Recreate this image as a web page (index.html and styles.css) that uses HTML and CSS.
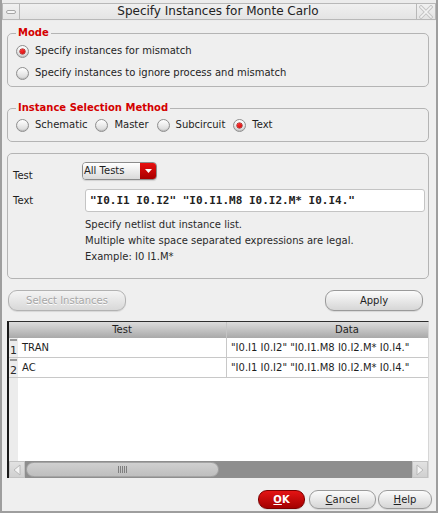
FILE: index.html
```html
<!DOCTYPE html>
<html>
<head>
<meta charset="utf-8">
<title>Specify Instances for Monte Carlo</title>
<link rel="stylesheet" href="styles.css">
</head>
<body>
<div class="win">
  <div class="titlebar">
    <div class="tb-btn tb-min"><span class="min-bar"></span></div>
    <div class="tb-title">Specify Instances for Monte Carlo</div>
    <div class="tb-btn tb-close">
      <svg width="14" height="14" viewBox="0 0 14 14">
        <path d="M2 2 L12 12 M12 2 L2 12" stroke="#c4c4c4" stroke-width="3.6" stroke-linecap="square" fill="none"/>
        <path d="M2 2 L12 12 M12 2 L2 12" stroke="#f2f2f2" stroke-width="1.6" stroke-linecap="square" fill="none"/>
      </svg>
    </div>
  </div>

  <fieldset class="group g-mode">
    <legend>Mode</legend>
    <div class="radio-row"><span class="radio on"></span><span>Specify instances for mismatch</span></div>
    <div class="radio-row"><span class="radio"></span><span>Specify instances to ignore process and mismatch</span></div>
  </fieldset>

  <fieldset class="group g-method">
    <legend>Instance Selection Method</legend>
    <div class="radio-inline">
      <div class="radio-item"><span class="radio"></span><span>Schematic</span></div>
      <div class="radio-item"><span class="radio"></span><span>Master</span></div>
      <div class="radio-item"><span class="radio"></span><span>Subcircuit</span></div>
      <div class="radio-item"><span class="radio on"></span><span>Text</span></div>
    </div>
  </fieldset>

  <div class="panel">
    <div class="form-row row-test">
      <span class="lbl lbl-test">Test</span>
      <div class="combo"><span class="combo-text">All Tests</span><span class="combo-arrow"><svg width="7" height="4" viewBox="0 0 7 4"><path d="M0 0 H7 L3.5 4 Z" fill="#ffffff"/></svg></span></div>
    </div>
    <div class="form-row row-text">
      <span class="lbl lbl-text">Text</span>
      <div class="input">"I0.I1 I0.I2" "I0.I1.M8 I0.I2.M* I0.I4."</div>
    </div>
    <div class="help">
      <div>Specify netlist dut instance list.</div>
      <div>Multiple white space separated expressions are legal.</div>
      <div>Example: I0 I1.M*</div>
    </div>
  </div>

  <div class="btn-row">
    <div class="btn btn-select disabled">Select Instances</div>
    <div class="btn btn-apply">Apply</div>
  </div>

  <div class="table">
    <div class="thead">
      <div class="th th-num"></div>
      <div class="th th-test">Test</div>
      <div class="th th-data">Data</div>
    </div>
    <div class="tbody">
      <div class="tr">
        <div class="td num"><span class="grip"></span><span class="n">1</span></div>
        <div class="td test">TRAN</div>
        <div class="td data">"I0.I1 I0.I2" "I0.I1.M8 I0.I2.M* I0.I4."</div>
      </div>
      <div class="tr">
        <div class="td num"><span class="grip"></span><span class="n">2</span></div>
        <div class="td test">AC</div>
        <div class="td data">"I0.I1 I0.I2" "I0.I1.M8 I0.I2.M* I0.I4."</div>
      </div>
      <div class="filler"></div>
    </div>
    <div class="hscroll">
      <div class="sb-arrow"><svg width="10" height="12" viewBox="0 0 10 12"><path d="M8 1 L2 6 L8 11 Z" fill="#f4f4f4" stroke="#b8b8b8" stroke-width="1"/></svg></div>
      <div class="sb-track"><div class="sb-thumb"><span class="sb-grip"></span></div></div>
      <div class="sb-arrow"><svg width="10" height="12" viewBox="0 0 10 12"><path d="M2 1 L8 6 L2 11 Z" fill="#f4f4f4" stroke="#b8b8b8" stroke-width="1"/></svg></div>
    </div>
  </div>

  <div class="footer">
    <div class="btn btn-ok"><span class="u">O</span>K</div>
    <div class="btn btn-cancel"><span class="u">C</span>ancel</div>
    <div class="btn btn-help"><span class="u">H</span>elp</div>
  </div>
</div>
</body>
</html>
```

FILE: styles.css
```css
* { box-sizing: border-box; }
html, body { margin: 0; padding: 0; }
body {
  width: 438px;
  height: 513px;
  overflow: hidden;
  font-family: "DejaVu Sans", sans-serif;
  font-size: 10px;
  line-height: 12px;
  color: #1e1e1e;
  background: #efefef;
}
.win {
  width: 438px;
  height: 513px;
  border: 2px solid #9e9e9e;
  border-top: 0;
  background: #efefef;
  display: flex;
  flex-direction: column;
  overflow: hidden;
}

/* title bar */
.titlebar {
  height: 21px;
  padding-top: 3px;
  display: flex;
  background: #ececec;
  flex: none;
}
.tb-btn, .tb-title {
  height: 17px;
  border: 1px solid #b8b8b8;
  background: linear-gradient(#f0f0f0, #e4e4e4);
}
.tb-min {
  width: 18px;
  display: flex;
  align-items: center;
  justify-content: center;
}
.min-bar {
  width: 10px;
  height: 4px;
  border: 1px solid #a6a6a6;
  border-radius: 2px;
  background: #f6f6f6;
}
.tb-title {
  flex: 1;
  border-left: 0;
  border-right: 0;
  text-align: center;
  font-size: 12px;
  line-height: 15px;
  color: #222;
}
.tb-close {
  width: 20px;
  display: flex;
  align-items: center;
  justify-content: center;
}

/* group boxes */
.group {
  margin: 0 7px 0 5px;
  padding: 0 8px;
  border: 1px solid #b4b4b4;
  border-radius: 5px;
  min-inline-size: 0;
  flex: none;
}
.group legend {
  padding: 0 2px;
  font-weight: bold;
  color: #d40000;
  line-height: 12px;
}
.g-mode { margin-top: 6px; padding-top: 1px; padding-bottom: 2px; }
.g-method { margin-top: 15px; padding-top: 1px; padding-bottom: 6px; }

.radio-row {
  height: 22px;
  display: flex;
  align-items: center;
}
.radio-inline {
  height: 20px;
  display: flex;
  align-items: center;
  gap: 8px;
}
.radio-item {
  display: flex;
  align-items: center;
}
.radio {
  width: 13px;
  height: 13px;
  border-radius: 50%;
  border: 1px solid #8e8e8e;
  background: linear-gradient(#ffffff, #d6d6d6);
  box-shadow: inset 0 -1px 1px rgba(0,0,0,0.12);
  margin-right: 6px;
  position: relative;
  flex: none;
}
.radio.on::after {
  content: "";
  position: absolute;
  left: 3px;
  top: 3px;
  width: 5px;
  height: 5px;
  border-radius: 50%;
  background: radial-gradient(circle at 40% 35%, #ff3030, #c00000);
  box-shadow: 0 0 0 0.5px #8a0000;
}

/* panel */
.panel {
  margin: 11px 7px 0 5px;
  height: 126px;
  border: 1px solid #b4b4b4;
  border-radius: 5px;
  padding: 8px 3px 0 5px;
  flex: none;
}
.form-row { display: flex; }
.row-test { height: 18px; align-items: flex-start; }
.lbl-test { width: 69px; margin-top: 8px; }
.combo {
  width: 75px;
  height: 18px;
  display: flex;
  border: 1px solid #8c8c8c;
  border-radius: 4px;
  overflow: hidden;
  box-shadow: 0 1px 1px rgba(0,0,0,0.12);
}
.combo-text {
  flex: 1;
  padding-left: 1px;
  line-height: 15px;
  background: linear-gradient(#ffffff, #dadada);
  color: #1e1e1e;
}
.combo-arrow {
  width: 16px;
  display: flex;
  align-items: center;
  justify-content: center;
  background: linear-gradient(#e81010, #a80000);
}
.row-text { margin-top: 9px; height: 23px; align-items: center; }
.lbl-text { width: 72px; }
.input {
  flex: 1;
  height: 23px;
  background: #ffffff;
  border: 1px solid #c4c4c4;
  border-radius: 3px;
  padding-left: 4px;
  font-family: "DejaVu Sans Mono", monospace;
  font-weight: bold;
  font-size: 11px;
  line-height: 21px;
  color: #222;
  white-space: nowrap;
}
.help {
  margin: 5px 0 0 72px;
  line-height: 16px;
  color: #2a2a2a;
}

/* buttons */
.btn {
  height: 21px;
  border: 1px solid #9a9a9a;
  border-radius: 9px;
  background: linear-gradient(#fbfbfb, #d6d6d6);
  text-align: center;
  line-height: 19px;
  color: #1e1e1e;
  box-shadow: 0 1px 1px rgba(0,0,0,0.1);
}
.btn-row {
  margin: 11px 13px 0 6px;
  display: flex;
  justify-content: space-between;
  flex: none;
}
.btn-select { width: 118px; }
.btn.disabled {
  color: #a6a6a6;
  text-shadow: 0 1px 0 #ffffff;
  border-color: #b2b2b2;
  background: linear-gradient(#f4f4f4, #d8d8d8);
}
.btn-apply { width: 98px; }

/* table */
.table {
  margin: 10px 0 0 5px;
  width: 422px;
  height: 157px;
  border-top: 1px solid #2e2e2e;
  border-left: 2px solid #1a1a1a;
  border-right: 1px solid #d6d6d6;
  display: flex;
  flex-direction: column;
  background: #ffffff;
  flex: none;
}
.thead {
  height: 16px;
  display: grid;
  grid-template-columns: 9px 208px 1fr;
  background: linear-gradient(#dcdcdc, #a9a9a9);
  flex: none;
}
.th {
  line-height: 16px;
  color: #1e1e1e;
  white-space: nowrap;
  overflow: hidden;
}
.th-test { text-align: center; }
.th-data {
  border-left: 1px solid #c4c4c4;
  padding-left: 108px;
}
.tbody {
  flex: 1;
  display: flex;
  flex-direction: column;
  background: linear-gradient(to right, #ececec 9px, #ffffff 9px);
}
.tr {
  height: 20px;
  display: grid;
  grid-template-columns: 9px 208px 1fr;
  border-bottom: 1px solid #c8c8c8;
  flex: none;
}
.td {
  line-height: 19px;
  white-space: nowrap;
  overflow: hidden;
}
.td.test { padding-left: 4px; background: #ffffff; }
.td.data { padding-left: 4px; border-left: 1px solid #c8c8c8; background: #ffffff; }
.td.num {
  background: #ececec;
  position: relative;
  font-size: 11px;
}
.grip {
  position: absolute;
  left: 1px;
  top: 1px;
  width: 7px;
  height: 2px;
  background: #9a9a9a;
}
.n {
  position: absolute;
  left: 1px;
  bottom: -3px;
  color: #2a2a2a;
}
.filler { flex: 1; }

.hscroll {
  height: 17px;
  display: flex;
  background: #8e8e8e;
  flex: none;
}
.sb-arrow {
  width: 16px;
  background: linear-gradient(#e2e2e2, #d0d0d0);
  border: 1px solid #c2c2c2;
  display: flex;
  align-items: center;
  justify-content: center;
}
.sb-track {
  flex: 1;
  padding: 1px 0 1px 1px;
}
.sb-thumb {
  width: 193px;
  height: 15px;
  border-radius: 8px;
  border: 1px solid #a4a4a4;
  background: linear-gradient(#d0d0d0, #bebebe);
  display: flex;
  align-items: center;
  justify-content: center;
}
.sb-grip {
  width: 9px;
  height: 7px;
  background: repeating-linear-gradient(to right, #7e7e7e 0 1px, transparent 1px 2px);
}

/* footer */
.footer {
  margin-top: 12px;
  padding-right: 4px;
  display: flex;
  justify-content: flex-end;
  flex: none;
}
.footer .btn { height: 19px; line-height: 17px; }
.btn-ok {
  width: 47px;
  margin-right: 4px;
  background: linear-gradient(#e41414, #a40000);
  border-color: #7c0000;
  color: #ffffff;
  font-weight: bold;
}
.btn-cancel { width: 67px; margin-right: 2px; }
.btn-help { width: 54px; }
.u { text-decoration: underline; }
```
